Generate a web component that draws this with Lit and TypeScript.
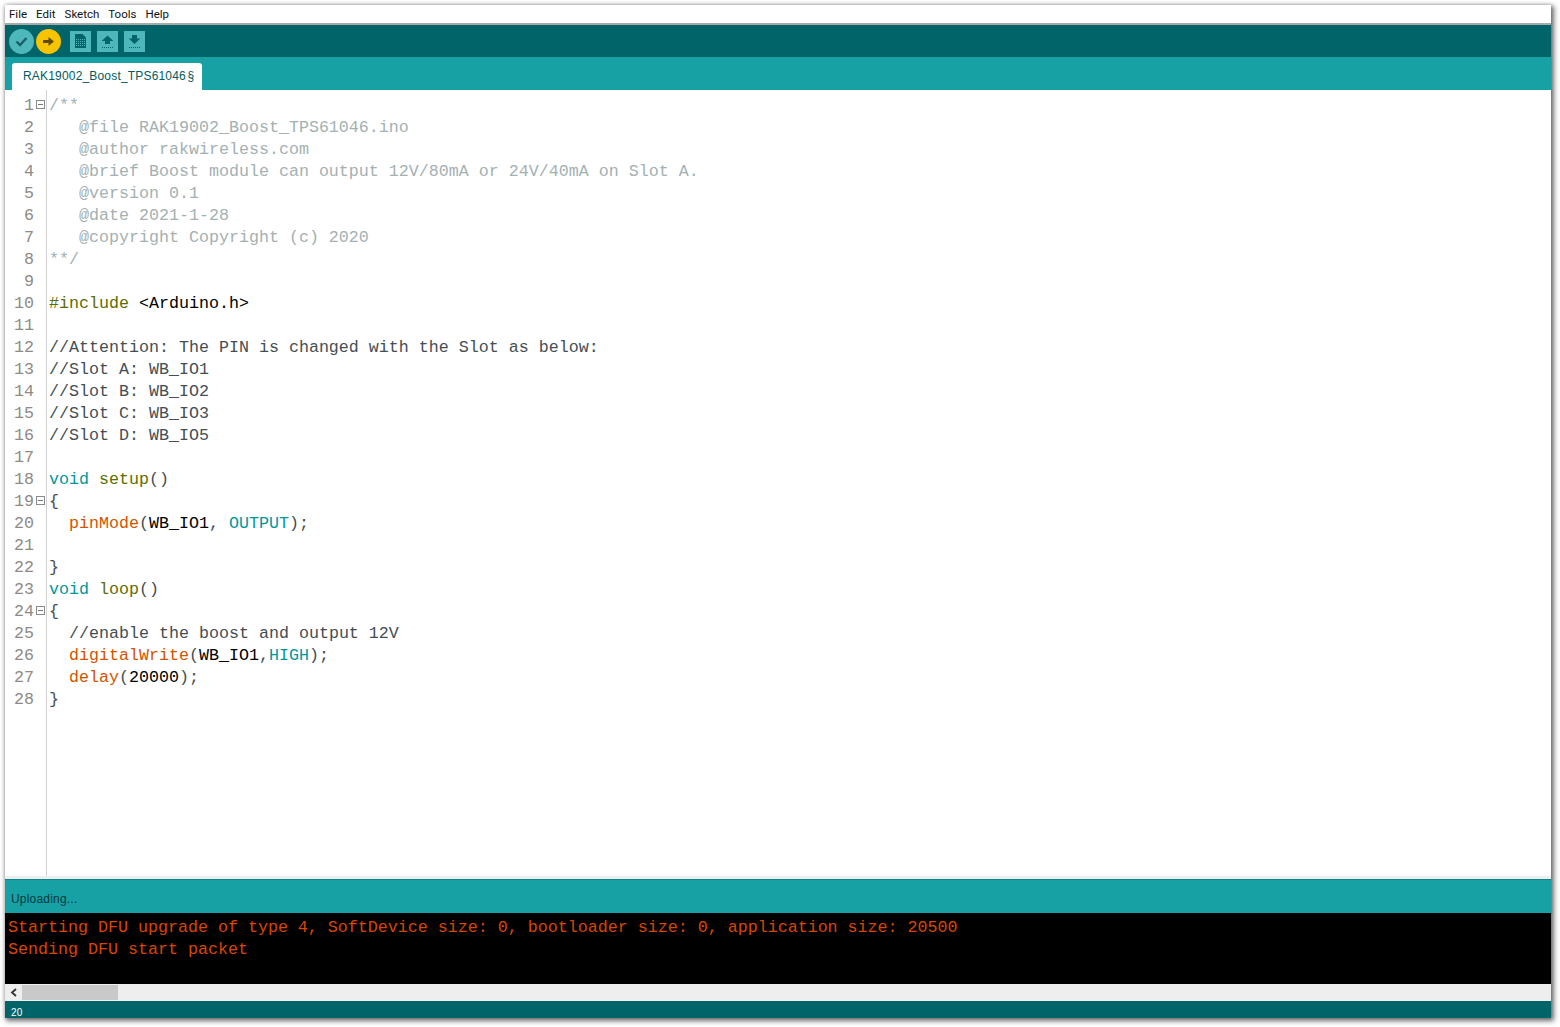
import { LitElement, html, css } from "lit";
import { customElement } from "lit/decorators.js";

type Seg = [string, string];
const C = "c", K = "k", F = "f", O = "o", P = "p", T = "t", I = "i", N = "n", B = "b";

const LINES: Seg[][] = [
  [[C, "/**"]],
  [[C, "   @file RAK19002_Boost_TPS61046.ino"]],
  [[C, "   @author rakwireless.com"]],
  [[C, "   @brief Boost module can output 12V/80mA or 24V/40mA on Slot A."]],
  [[C, "   @version 0.1"]],
  [[C, "   @date 2021-1-28"]],
  [[C, "   @copyright Copyright (c) 2020"]],
  [[C, "**/"]],
  [],
  [[I, "#include"], [T, " "], [B, "<Arduino.h>"]],
  [],
  [[N, "//Attention: The PIN is changed with the Slot as below:"]],
  [[N, "//Slot A: WB_IO1"]],
  [[N, "//Slot B: WB_IO2"]],
  [[N, "//Slot C: WB_IO3"]],
  [[N, "//Slot D: WB_IO5"]],
  [],
  [[K, "void"], [T, " "], [I, "setup"], [P, "()"]],
  [[P, "{"]],
  [[T, "  "], [F, "pinMode"], [P, "("], [B, "WB_IO1"], [P, ", "], [O, "OUTPUT"], [P, ");"]],
  [],
  [[P, "}"]],
  [[K, "void"], [T, " "], [I, "loop"], [P, "()"]],
  [[P, "{"]],
  [[T, "  "], [N, "//enable the boost and output 12V"]],
  [[T, "  "], [F, "digitalWrite"], [P, "("], [B, "WB_IO1"], [P, ","], [O, "HIGH"], [P, ");"]],
  [[T, "  "], [F, "delay"], [P, "("], [B, "20000"], [P, ");"]],
  [[P, "}"]],
];
const FOLDS = new Set([1, 19, 24]);

@customElement("app-root")
export class AppRoot extends LitElement {
  static styles = css`
    :host { display: block; height: 1027px; box-sizing: border-box; padding: 5px 9px 9px 5px; background: #fff; overflow: hidden; }
    .win { height: 100%; display: flex; flex-direction: column; box-shadow: 2px 2px 5px 1px rgba(0,0,0,.55), 0 0 4px rgba(0,0,0,.2); background: #fff; }
    .menu { flex: 0 0 18px; display: flex; gap: 9px; padding-left: 4px; align-items: center; font: 11.5px/18px Roboto, "Liberation Sans", sans-serif; color: #111; border-bottom: 2px solid #a9a9a9; }
    .toolbar { flex: 0 0 32px; background: #006468; display: flex; align-items: center; padding-left: 4px; }
    .round { width: 25px; height: 25px; border-radius: 50%; margin-right: 2px; display: flex; flex: none; }
    .round.v { background: #4db7bb; }
    .round.u { background: #f8c300; }
    .sq { width: 21px; height: 21px; background: #4db7bb; margin-right: 6px; flex: none; display: flex; }
    .sq.first { margin-left: 7px; }
    svg { display: block; }
    .tabs { flex: 0 0 33px; background: #17a1a5; display: flex; align-items: flex-end; padding-left: 7px; }
    .tab { height: 27px; width: 190px; box-sizing: border-box; padding: 5px 0 0 11px; background: #fff; border-radius: 3px 3px 0 0; font: 12px/17px "Liberation Sans", Arial, sans-serif; letter-spacing: .18px; word-spacing: -2px; color: #005c60; white-space: pre; }
    .editor { flex: 1 1 0; min-height: 0; display: flex; background: #fff; border-bottom: 3px solid #eee; overflow: hidden; }
    .gutter { flex: 0 0 41px; border-right: 1px solid #d2d2d2; padding-top: 5px; }
    .gl { height: 22px; display: flex; align-items: center; justify-content: flex-end; font: 16.67px/22px "Liberation Mono", "Courier New", monospace; color: #8f8a86; padding-right: 1px; }
    .num { width: 20px; text-align: right; margin-right: 11px; }
    .fold .num { margin-right: 2px; }
    .box { width: 7px; height: 7px; border: 1px solid #8a8a8a; position: relative; flex: none; margin-bottom: 3px; }
    .box::after { content: ""; position: absolute; left: 1px; right: 1px; top: 3px; height: 1px; background: #777; }
    .code { flex: 1; padding: 5px 0 0 2px; font: 16.67px/22px "Liberation Mono", "Courier New", monospace; white-space: pre; color: #434f54; }
    .ln { height: 22px; }
    .c { color: #a3b1b2; } .k { color: #00979c; } .f { color: #d35400; } .o { color: #00979c; }
    .p { color: #434f54; } .i { color: #5e6d03; } .n { color: #434f54; } .b { color: #000; }
    .status { flex: 0 0 34px; background: #17a1a5; border-top: 1px solid #0f8589; display: flex; align-items: center; padding: 4px 0 0 6px; box-sizing: border-box; font: 12px "Liberation Sans", Arial, sans-serif; letter-spacing: .2px; color: #003a3d; }
    .console { flex: 0 0 71px; background: #000; color: #d94600; font: 16.67px/22px "Liberation Mono", "Courier New", monospace; padding: 4px 0 0 3px; box-sizing: border-box; white-space: pre; }
    .scroll { flex: 0 0 17px; background: #eee; display: flex; align-items: center; }
    .arrow { width: 17px; flex: none; display: flex; justify-content: center; }
    .thumb { width: 96px; height: 15px; background: #c9c9c9; }
    .foot { flex: 0 0 17px; background: #006468; color: #fff; font: 10px/13px "Liberation Sans", Arial, sans-serif; letter-spacing: .2px; padding: 5px 0 0 6px; box-sizing: border-box; overflow: hidden; }
  `;

  render() {
    const ink = "#006468";
    const bg = "#4db7bb";
    return html`<div class="win">
      <div class="menu"><span>File</span><span>Edit</span><span>Sketch</span><span>Tools</span><span>Help</span></div>
      <div class="toolbar">
        <div class="round v"><svg width="25" height="25" viewBox="0 0 25 25"><path d="M7.500 12.500l3.500 3.500 6.500-7" fill="none" stroke="#1d5f66" stroke-width="2.400"/></svg></div>
        <div class="round u"><svg width="25" height="25" viewBox="0 0 25 25"><path d="M7 11h5.500V8l5.500 4.500-5.500 4.500v-3H7z" fill="#5b4a00"/></svg></div>
        <div class="sq first"><svg width="21" height="21" viewBox="0 0 21 21"><path d="M5 3h7.500L16 6.500V17H5z" fill="${ink}"/><path d="M6 8.500h9M6 10.500h9M6 12.500h9M6 14.500h9" stroke="${bg}" stroke-width="1" stroke-dasharray="1 1"/></svg></div>
        <div class="sq"><svg width="21" height="21" viewBox="0 0 21 21"><path d="M10.500 4.500l5.800 5.500H13v3H8v-3H4.700z" fill="${ink}"/><path d="M5 16.500h11" stroke="${ink}" stroke-width="1" stroke-dasharray="1 1"/></svg></div>
        <div class="sq"><svg width="21" height="21" viewBox="0 0 21 21"><path d="M10.500 13l-5.800-5.500H8V4h5v3.500h3.300z" fill="${ink}"/><path d="M5 16.500h11" stroke="${ink}" stroke-width="1" stroke-dasharray="1 1"/></svg></div>
      </div>
      <div class="tabs"><div class="tab">RAK19002_Boost_TPS61046 §</div></div>
      <div class="editor">
        <div class="gutter">${LINES.map((_, i) => html`<div class="gl ${FOLDS.has(i + 1) ? "fold" : ""}"><span class="num">${i + 1}</span>${FOLDS.has(i + 1) ? html`<span class="box"></span>` : ""}</div>`)}</div>
        <div class="code">${LINES.map((l) => html`<div class="ln">${l.map(([c, t]) => html`<span class="${c}">${t}</span>`)}</div>`)}</div>
      </div>
      <div class="status">Uploading...</div>
      <div class="console">Starting DFU upgrade of type 4, SoftDevice size: 0, bootloader size: 0, application size: 20500
Sending DFU start packet</div>
      <div class="scroll"><div class="arrow"><svg width="8" height="9" viewBox="0 0 8 9"><path d="M6 1L2 4.500 6 8" fill="none" stroke="#333" stroke-width="1.800"/></svg></div><div class="thumb"></div></div>
      <div class="foot">20</div>
    </div>`;
  }
}
